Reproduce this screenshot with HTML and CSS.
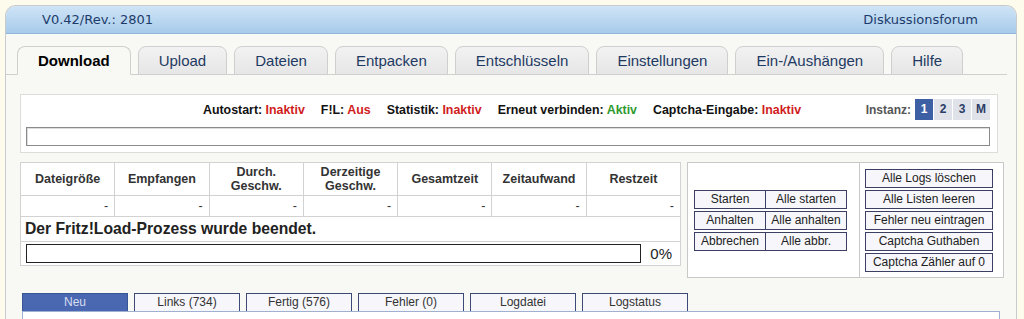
FILE: index.html
```html
<!DOCTYPE html>
<html lang="de">
<head>
<meta charset="UTF-8">
<title>Fritz!Load - Download</title>
<link rel="stylesheet" href="styles.css">
</head>
<body>
<div class="app">
  <div class="topbar">
    <span>V0.42/Rev.: 2801</span>
    <span>Diskussionsforum</span>
  </div>

  <ul class="tabs">
    <li class="tab active">Download</li>
    <li class="tab">Upload</li>
    <li class="tab">Dateien</li>
    <li class="tab">Entpacken</li>
    <li class="tab">Entschlüsseln</li>
    <li class="tab">Einstellungen</li>
    <li class="tab">Ein-/Aushängen</li>
    <li class="tab">Hilfe</li>
  </ul>

  <div class="content">
    <div class="status">
      <div class="status-row">
        <span></span>
        <div class="flags">
          <span>Autostart: <em class="off">Inaktiv</em></span>
          <span>F!L: <em class="off">Aus</em></span>
          <span>Statistik: <em class="off">Inaktiv</em></span>
          <span>Erneut verbinden: <em class="on">Aktiv</em></span>
          <span>Captcha-Eingabe: <em class="off">Inaktiv</em></span>
        </div>
        <div class="instances">
          <span class="inst-label">Instanz:</span>
          <span class="inst active">1</span>
          <span class="inst">2</span>
          <span class="inst">3</span>
          <span class="inst">M</span>
        </div>
      </div>
      <div class="logline"></div>
    </div>

    <div class="main">
      <table class="stats">
        <tr class="head">
          <th>Dateigröße</th>
          <th>Empfangen</th>
          <th>Durch.<br>Geschw.</th>
          <th>Derzeitige<br>Geschw.</th>
          <th>Gesamtzeit</th>
          <th>Zeitaufwand</th>
          <th>Restzeit</th>
        </tr>
        <tr class="values">
          <td>-</td><td>-</td><td>-</td><td>-</td><td>-</td><td>-</td><td>-</td>
        </tr>
        <tr>
          <td colspan="7" class="message">Der Fritz!Load-Prozess wurde beendet.</td>
        </tr>
        <tr>
          <td colspan="7" class="progress-cell">
            <div class="progress">
              <div class="bar"></div>
              <span class="percent">0%</span>
            </div>
          </td>
        </tr>
      </table>

      <div class="controls">
        <div class="ctrl-left">
          <div class="btn-grid">
            <span class="btn">Starten</span><span class="btn">Alle starten</span>
            <span class="btn">Anhalten</span><span class="btn">Alle anhalten</span>
            <span class="btn">Abbrechen</span><span class="btn">Alle abbr.</span>
          </div>
        </div>
        <div class="ctrl-right">
          <span class="btn">Alle Logs löschen</span>
          <span class="btn">Alle Listen leeren</span>
          <span class="btn">Fehler neu eintragen</span>
          <span class="btn">Captcha Guthaben</span>
          <span class="btn">Captcha Zähler auf 0</span>
        </div>
      </div>
    </div>

    <div class="lists">
      <div class="list-tabs">
        <span class="list-tab active">Neu</span>
        <span class="list-tab">Links (734)</span>
        <span class="list-tab">Fertig (576)</span>
        <span class="list-tab">Fehler (0)</span>
        <span class="list-tab">Logdatei</span>
        <span class="list-tab">Logstatus</span>
      </div>
      <div class="list-body"></div>
    </div>
  </div>
</div>
</body>
</html>
```

FILE: styles.css
```css
body {
	margin: 0;
	background-color: #fdfcec;
	font-family: "Liberation Sans", Arial, Helvetica, sans-serif;
	font-size: 12px;
	color: #222;
}

.app {
	margin: 5px 7px 0 5px;
	height: 314px;
	background-color: #f8f8f4;
	border: 1px solid #c8cbce;
	border-bottom: none;
	border-radius: 11px 11px 0 0;
	overflow: hidden;
}

/* top bar */
.topbar {
	height: 27px;
	display: flex;
	justify-content: space-between;
	align-items: center;
	padding: 0 38px 0 36px;
	background: linear-gradient(#cfe4f6, #a7cbea);
	border-bottom: 1px solid #93b6d8;
	font-family: "DejaVu Sans", Verdana, sans-serif;
	font-size: 13px;
	color: #1c3b6b;
}

/* main tabs */
.tabs {
	list-style: none;
	display: flex;
	gap: 7px;
	margin: 12px 9px 0 0;
	padding: 0 0 0 11px;
	border-bottom: 1px solid #cfcfcf;
}

.tab {
	height: 27px;
	line-height: 27px;
	padding: 0 20px;
	margin-bottom: -1px;
	background: linear-gradient(#f2f2f2, #e6e6e6);
	border: 1px solid #cfcfcf;
	border-radius: 8px 8px 0 0;
	font-size: 15px;
	color: #1e3a62;
}

.tab.active {
	background: #f8f8f4;
	border-bottom-color: #f8f8f4;
	color: #000;
	font-weight: bold;
}

.content {
	padding: 19px 12px 0 14px;
}

/* status box */
.status {
	margin-right: 6px;
	padding: 4px 7px 6px 5px;
	background-color: #fff;
	border: 1px solid #dcdcd8;
}

.status-row {
	display: grid;
	grid-template-columns: 1fr auto 1fr;
	align-items: center;
	height: 21px;
	font-weight: bold;
}

.flags {
	display: flex;
	gap: 16px;
	margin-right: 12px;
	font-size: 12.4px;
	color: #111;
}

.flags em {
	font-style: normal;
}

.off {
	color: #d01c1c;
}

.on {
	color: #2e9a2e;
}

.instances {
	display: flex;
	justify-content: flex-end;
	align-items: center;
	gap: 1px;
}

.inst-label {
	color: #555;
	margin-right: 3px;
}

.inst {
	width: 18px;
	height: 21px;
	line-height: 21px;
	text-align: center;
	background-color: #dfe2e8;
	color: #2c3d66;
}

.inst.active {
	background-color: #3d5fa3;
	color: #fff;
}

.logline {
	height: 17px;
	margin-top: 7px;
	background-color: #fff;
	border: 1px solid #8a8a8a;
	box-shadow: inset 1px 1px 0 #ddd;
}

/* statistics + control buttons */
.main {
	display: flex;
	gap: 6px;
	margin-top: 9px;
	align-items: flex-start;
}

.stats {
	width: 661px;
	border-collapse: collapse;
	background-color: #fff;
	border: 1px solid #c4c4c4;
	font-size: 12.5px;
}

.stats th,
.stats td {
	border: 1px solid #d2d2d2;
	padding: 0;
}

.stats th {
	width: 14.28%;
	height: 32px;
	line-height: 14px;
	color: #333;
	font-weight: bold;
}

.stats .values td {
	height: 20px;
	text-align: right;
	padding-right: 6px;
	color: #333;
}

.stats .message {
	height: 24px;
	padding-left: 4px;
	font-size: 15.7px;
	font-weight: bold;
	color: #222;
}

.progress-cell {
	height: 23px;
}

.progress {
	display: flex;
	align-items: center;
	padding: 0 8px 0 5px;
}

.bar {
	flex: 1;
	height: 17px;
	border: 1px solid #222;
	background-color: #fff;
}

.percent {
	width: 31px;
	text-align: right;
	font-size: 15px;
	color: #222;
}

.controls {
	display: flex;
	width: 315px;
	height: 114px;
	background-color: #fff;
	border: 1px solid #c8c8c8;
}

.ctrl-left {
	width: 172px;
	display: flex;
	align-items: center;
	padding-left: 6px;
	box-sizing: border-box;
	border-right: 1px solid #c8c8c8;
}

.btn-grid {
	display: grid;
	grid-template-columns: 72px 81px;
	row-gap: 2px;
	margin-top: 1px;
}

.btn-grid .btn:nth-child(even) {
	border-left: none;
}

.ctrl-right {
	display: flex;
	flex-direction: column;
	gap: 2px;
	padding: 6px 0 0 5px;
}

.ctrl-right .btn {
	width: 126px;
}

.btn {
	display: block;
	height: 17px;
	line-height: 17px;
	text-align: center;
	background-color: #f6f6fb;
	border: 1px solid #3b3f63;
	color: #222;
	white-space: nowrap;
}

/* lists */
.lists {
	margin: 15px 4px 0 2px;
}

.list-tabs {
	display: flex;
	gap: 6px;
}

.list-tab {
	width: 104px;
	height: 17px;
	line-height: 17px;
	text-align: center;
	background-color: #f6f6fb;
	border: 1px solid #3d4a78;
	border-bottom: none;
	color: #333;
}

.list-tab.active {
	background-color: #4a68b1;
	border-color: #3a5596;
	color: #d9def2;
}

.list-body {
	height: 30px;
	background-color: #fff;
	border: 1px solid #9fb0d0;
}
```
